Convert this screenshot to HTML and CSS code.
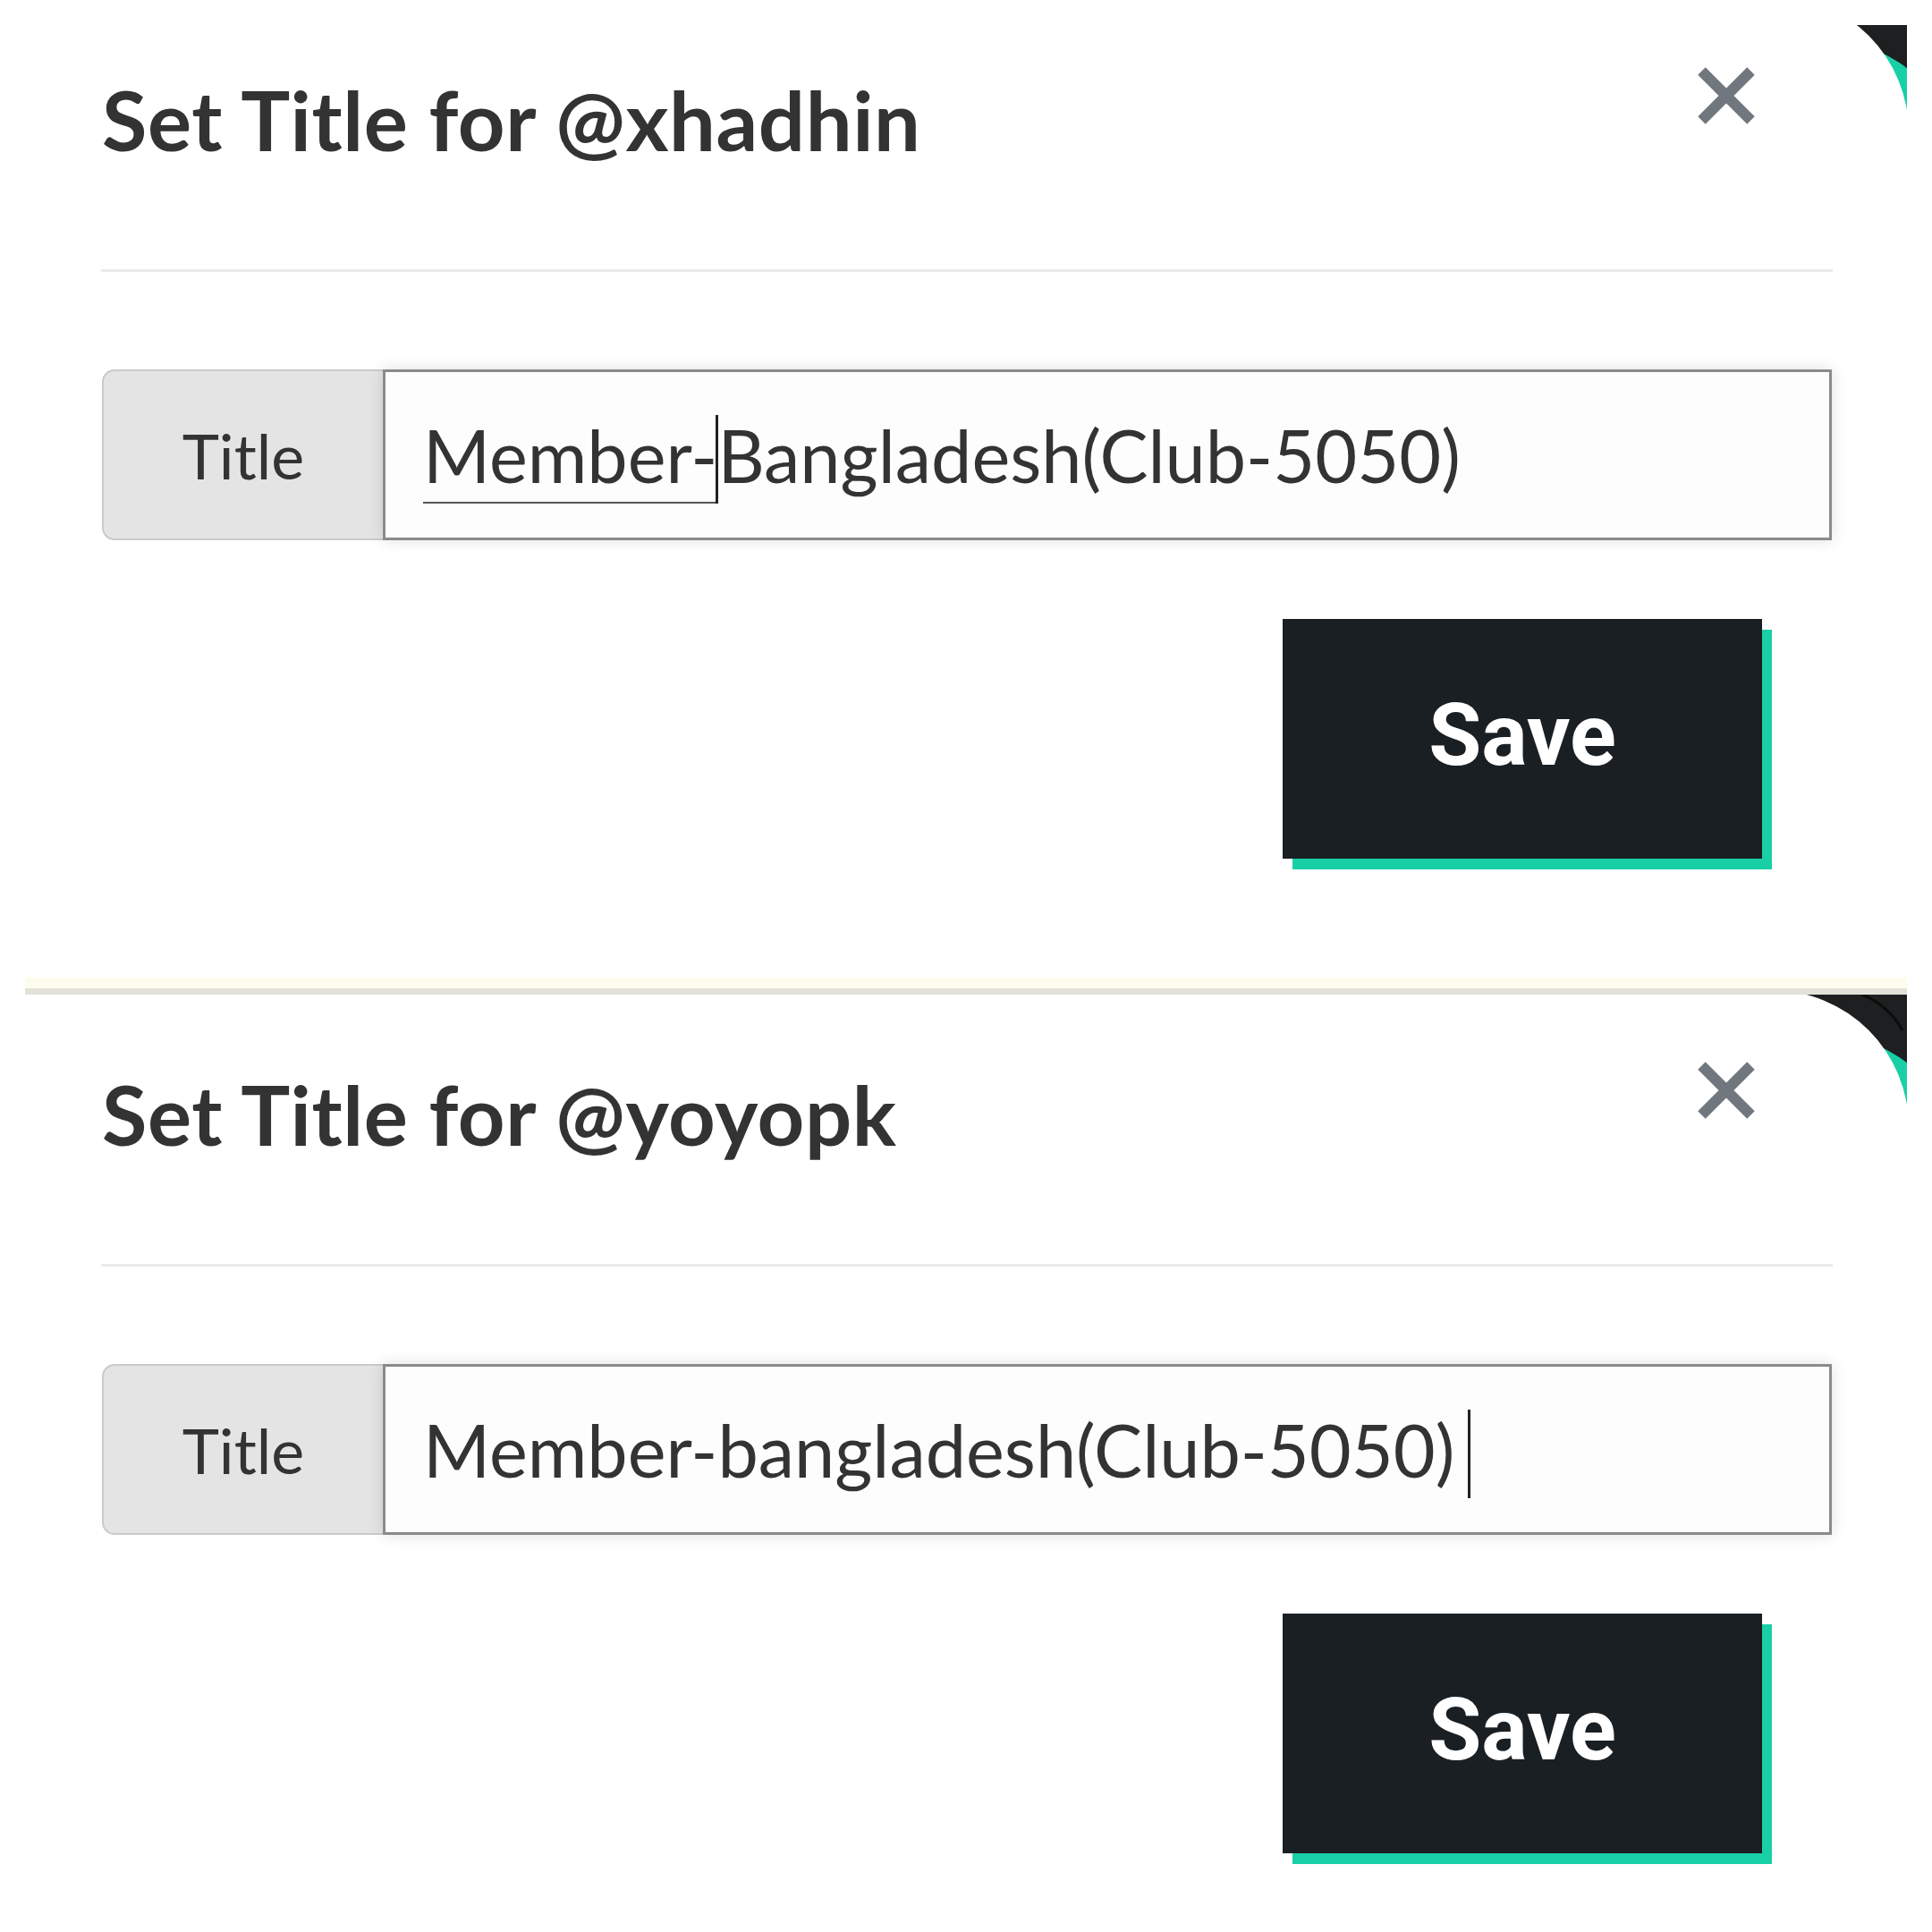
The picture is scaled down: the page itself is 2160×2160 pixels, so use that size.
FILE: index.html
```html
<!DOCTYPE html>
<html lang="en">
<head>
<meta charset="utf-8">
<title>Set Title</title>
<link rel="stylesheet" href="styles.css">
</head>
<body>
<div class="sheet">
  <section class="panel panel-first">
    <svg class="corner" viewBox="0 0 120 180" width="120" height="180" aria-hidden="true">
      <rect x="0" y="0" width="120" height="180" fill="#1d1f20"/>
      <circle cx="26" cy="197" r="153" fill="#19cfa6"/>
      <circle cx="-31" cy="148" r="153" fill="#ffffff"/>
      <rect x="-40" y="148" width="162" height="40" fill="#ffffff"/>
      <rect x="0" y="0" width="120" height="28" fill="#ffffff"/>
    </svg>
    <header class="modal-header">
      <h2 class="modal-title">Set Title for @xhadhin</h2>
      <button class="close" type="button" aria-label="Close">
        <svg viewBox="0 0 64 64" width="64" height="64"><path d="M4.5 4.5 59.5 59.5M59.5 4.5 4.5 59.5" stroke="#71777e" stroke-width="12" fill="none"/></svg>
      </button>
    </header>
    <div class="divider"></div>
    <div class="input-group">
      <span class="addon">Title</span>
      <div class="field"><span class="value"><span class="composing">Member-</span><span class="caret"></span>Bangladesh(Club-5050)</span></div>
    </div>
    <div class="actions"><button class="save" type="button">Save</button></div>
  </section>
  <div class="separator"></div>
  <section class="panel panel-second">
    <svg class="corner" viewBox="0 0 120 180" width="120" height="180" aria-hidden="true">
      <rect x="0" y="0" width="120" height="180" fill="#1d1f20"/>
      <path d="M70 0 A90 90 0 0 1 115 40" stroke="#0b0c0c" stroke-width="3" fill="none"/>
      <circle cx="26" cy="197" r="153" fill="#19cfa6"/>
      <circle cx="-31" cy="148" r="153" fill="#ffffff"/>
      <rect x="-40" y="148" width="162" height="40" fill="#ffffff"/>
    </svg>
    <header class="modal-header">
      <h2 class="modal-title">Set Title for @yoyopk</h2>
      <button class="close" type="button" aria-label="Close">
        <svg viewBox="0 0 64 64" width="64" height="64"><path d="M4.5 4.5 59.5 59.5M59.5 4.5 4.5 59.5" stroke="#71777e" stroke-width="12" fill="none"/></svg>
      </button>
    </header>
    <div class="divider"></div>
    <div class="input-group">
      <span class="addon">Title</span>
      <div class="field"><span class="value">Member-bangladesh(Club-5050)<span class="caret caret-end"></span></span></div>
    </div>
    <div class="actions"><button class="save" type="button">Save</button></div>
  </section>
</div>
</body>
</html>
```

FILE: styles.css
```css
html, body {
  margin: 0;
  padding: 0;
  background: #ffffff;
}

body {
  font-family: Lato, "Liberation Sans", sans-serif;
  color: #333333;
}

.sheet {
  width: 2104px;
  margin-left: 28px;
}

.panel {
  position: relative;
  overflow: hidden;
  box-sizing: border-box;
  height: 1093px;
  padding: 0 84px 0 86px;
  background: #ffffff;
}

.panel-second {
  height: 1048px;
}

.corner {
  position: absolute;
  top: 0;
  right: 0;
  display: block;
}

.separator {
  height: 19px;
  background: linear-gradient(#fdfcef 0 12px, #e2e2d9 12px 19px);
}

.modal-header {
  display: flex;
  justify-content: space-between;
  align-items: flex-start;
  height: 301px;
}

.modal-title {
  margin: 79px 0 0 0;
  font-family: Lato, "Liberation Sans", sans-serif;
  font-weight: 700;
  font-size: 92px;
  line-height: 1.2;
  letter-spacing: 0.6px;
  color: #333333;
}

.close {
  width: 64px;
  height: 64px;
  margin: 75px 86px 0 0;
  padding: 0;
  border: 0;
  background: none;
}

.close svg {
  display: block;
}

.divider {
  height: 3px;
  margin: 0 -1px;
  background: #ebebeb;
}

.input-group {
  display: flex;
  height: 191px;
  margin-top: 109px;
}

.addon {
  box-sizing: border-box;
  width: 314px;
  display: flex;
  align-items: center;
  justify-content: center;
  border: 2px solid #cacaca;
  border-right: 0;
  border-radius: 14px 0 0 14px;
  background: #e4e4e4;
  font-size: 70px;
  color: #333333;
}

.field {
  flex: 1;
  box-sizing: border-box;
  display: flex;
  align-items: center;
  padding-left: 42px;
  border: 3px solid #8b8b8b;
  background: #fdfdfd;
  font-size: 81px;
  line-height: 1.2;
  color: #333333;
  box-shadow: 0 0 16px rgba(0, 0, 0, 0.13);
}

.value {
  white-space: pre;
}

.composing {
  text-decoration: underline;
  text-decoration-thickness: 2px;
  text-underline-offset: 21px;
  text-decoration-color: #555555;
}

.caret {
  position: relative;
  display: inline-block;
  width: 0;
  height: 0;
}

.caret::after {
  content: "";
  position: absolute;
  left: -2px;
  bottom: -23px;
  width: 3px;
  height: 99px;
  background: #222222;
}

.caret-end {
  margin-left: 17px;
}

.actions {
  display: flex;
  justify-content: flex-end;
  margin-top: 88px;
  padding-right: 78px;
}

.save {
  width: 536px;
  height: 268px;
  padding: 0 0 8px 0;
  border: 0;
  background: #1a1f24;
  color: #ffffff;
  font-family: Roboto, "Liberation Sans", sans-serif;
  font-weight: 700;
  font-size: 96px;
  box-shadow: 11px 12px 0 #19cfa6;
}
```
